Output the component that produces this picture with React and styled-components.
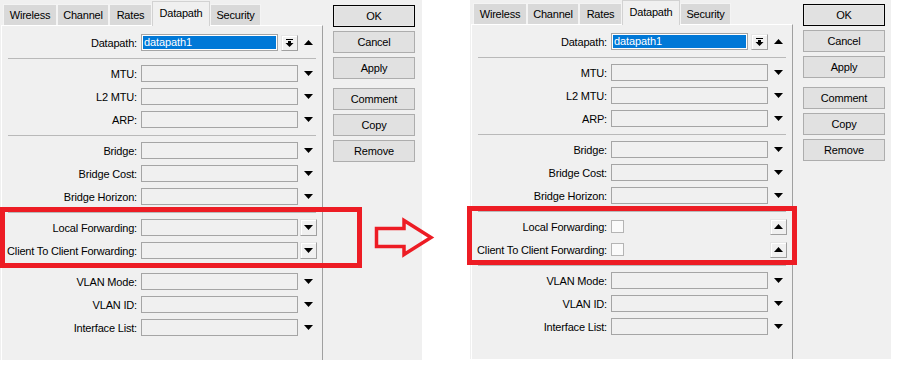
import React from "react";
import styled, { createGlobalStyle } from "styled-components";

const GlobalStyle = createGlobalStyle`
  html, body {
    margin: 0;
    padding: 0;
    background: #ffffff;
  }
  body {
    font-family: "Liberation Sans", Arial, sans-serif;
    font-size: 11px;
    color: #000;
  }
  * {
    box-sizing: border-box;
  }
`;

const Page = styled.div`
  position: relative;
  display: flex;
  gap: 48px;
  width: 906px;
  height: 367px;
`;

const Window = styled.div`
  display: flex;
  width: ${(p) => p.$width}px;
  height: ${(p) => p.$height}px;
  padding: ${(p) => p.$top}px 0 0 1px;
  background: #f0f0f0;
`;

const Form = styled.div`
  display: flex;
  flex-direction: column;
  width: 322px;
`;

const TabStrip = styled.div`
  display: flex;
  align-items: flex-end;
  height: 24px;
  padding-left: 2px;
  position: relative;
  z-index: 1;
`;

const Tab = styled.div`
  display: flex;
  align-items: center;
  justify-content: center;
  width: ${(p) => p.$w}px;
  height: ${(p) => (p.$active ? 25 : 21)}px;
  margin-bottom: ${(p) => (p.$active ? -1 : 0)}px;
  padding-bottom: ${(p) => (p.$active ? 3 : 0)}px;
  background: ${(p) => (p.$active ? "#f0f0f0" : "#d9d9d9")};
  border: 1px solid ${(p) => (p.$active ? "#d2d2d2" : "#f4f4f4")};
  border-bottom: none;
  letter-spacing: -0.2px;
  white-space: nowrap;
`;

const Pane = styled.div`
  flex: 1;
  border-top: 1px solid #ffffff;
  border-left: 1px solid #ffffff;
  border-right: 1px solid #a0a0a0;
  padding-top: 5px;
`;

const Row = styled.div`
  display: flex;
  align-items: center;
  height: 23px;
`;

const Label = styled.div`
  width: 135px;
  margin-right: 4px;
  text-align: right;
  white-space: nowrap;
  letter-spacing: -0.18px;
`;

const Field = styled.div`
  display: flex;
  align-items: center;
  gap: ${(p) => p.$gap || 0}px;
  width: 157px;
  height: 17px;
`;

const Input = styled.div`
  flex: 1;
  height: 17px;
  padding: 1px 2px;
  border: 1px solid #a5a5a5;
  background: ${(p) => (p.$selected ? "#0078d7" : "#f0f0f0")};
  box-shadow: ${(p) => (p.$selected ? "inset 0 0 0 1px #ffffff" : "none")};
  color: #ffffff;
  line-height: 13px;
  letter-spacing: -0.1px;
`;

const Checkbox = styled.div`
  width: 13px;
  height: 13px;
  border: 1px solid #b4b4b4;
  background: #fafafa;
`;

const Side = styled.div`
  display: flex;
  align-items: center;
  justify-content: center;
  width: 17px;
  margin-left: 2px;
`;

const SmallButton = styled.div`
  display: flex;
  align-items: center;
  justify-content: center;
  width: 17px;
  height: ${(p) => p.$h || 17}px;
  background: #f0f0f0;
  border: 1px solid;
  border-color: #e6e6e6 #a0a0a0 #a0a0a0 #e6e6e6;
  box-shadow: inset 1px 1px 0 #ffffff;
`;

const Separator = styled.div`
  margin: 4px 6px 3px;
  height: 0;
  border-top: 1px solid #b9b9b9;
`;

const Actions = styled.div`
  display: flex;
  flex-direction: column;
  gap: 4px;
  width: 82px;
  margin: 4px 0 0 10px;
`;

const ActionButton = styled.button`
  height: 22px;
  margin-top: ${(p) => (p.$spaced ? 5 : 0)}px;
  padding: 0;
  font-family: "Liberation Sans", Arial, sans-serif;
  font-size: 11px;
  letter-spacing: -0.2px;
  color: #000;
  background: #e1e1e1;
  border: 1px solid ${(p) => (p.$default ? "#000000" : "#adadad")};
  box-shadow: ${(p) => (p.$default ? "inset 0 0 0 1px #e8e8e8" : "none")};
`;

const Highlight = styled.div`
  position: absolute;
  left: ${(p) => p.$x}px;
  top: ${(p) => p.$y}px;
  width: ${(p) => p.$w}px;
  height: ${(p) => p.$h}px;
  border: 5px solid #ed1c24;
  pointer-events: none;
`;

const ArrowMark = styled.svg`
  position: absolute;
  left: 372px;
  top: 216px;
  overflow: visible;
`;

const Triangle = ({ up }) => (
  <svg width="9" height="5" viewBox="0 0 9 5">
    <polygon points={up ? "0,5 9,5 4.5,0" : "0,0 9,0 4.5,5"} fill="#000" />
  </svg>
);

const DropIcon = () => (
  <svg width="9" height="9" viewBox="0 0 9 9">
    <rect x="1" y="1" width="7" height="1" fill="#000" />
    <rect x="3" y="3" width="3" height="2" fill="#000" />
    <polygon points="0.5,5 8.5,5 4.5,9" fill="#000" />
  </svg>
);

const tabs = [
  { name: "Wireless", w: 54 },
  { name: "Channel", w: 52 },
  { name: "Rates", w: 43 },
  { name: "Datapath", w: 58, active: true },
  { name: "Security", w: 51 },
];

const groups = [
  [{ label: "Datapath", kind: "combo", value: "datapath1" }],
  [{ label: "MTU" }, { label: "L2 MTU" }, { label: "ARP" }],
  [{ label: "Bridge" }, { label: "Bridge Cost" }, { label: "Bridge Horizon" }],
  [
    { label: "Local Forwarding", kind: "flag" },
    { label: "Client To Client Forwarding", kind: "flag" },
  ],
  [{ label: "VLAN Mode" }, { label: "VLAN ID" }, { label: "Interface List" }],
];

const actions = [
  { name: "OK", default: true },
  { name: "Cancel" },
  { name: "Apply" },
  { name: "Comment", spaced: true },
  { name: "Copy" },
  { name: "Remove" },
];

const FormRow = ({ item, checkMode }) => {
  if (item.kind === "combo") {
    return (
      <Row>
        <Label>{item.label}:</Label>
        <Field $gap={3}>
          <Input $selected>{item.value}</Input>
          <SmallButton $h={16}>
            <DropIcon />
          </SmallButton>
        </Field>
        <Side>
          <Triangle up />
        </Side>
      </Row>
    );
  }
  if (item.kind === "flag") {
    return (
      <Row>
        <Label>{item.label}:</Label>
        <Field>{checkMode ? <Checkbox /> : <Input />}</Field>
        <Side>
          <SmallButton $h={checkMode ? 16 : 17}>
            <Triangle up={checkMode} />
          </SmallButton>
        </Side>
      </Row>
    );
  }
  return (
    <Row>
      <Label>{item.label}:</Label>
      <Field>
        <Input />
      </Field>
      <Side>
        <Triangle />
      </Side>
    </Row>
  );
};

const DatapathWindow = ({ width, height, top, checkMode }) => (
  <Window $width={width} $height={height} $top={top}>
    <Form>
      <TabStrip>
        {tabs.map((t) => (
          <Tab key={t.name} $w={t.w} $active={t.active}>
            {t.name}
          </Tab>
        ))}
      </TabStrip>
      <Pane>
        {groups.map((group, gi) => (
          <React.Fragment key={gi}>
            {gi > 0 && <Separator />}
            {group.map((item) => (
              <FormRow key={item.label} item={item} checkMode={checkMode} />
            ))}
          </React.Fragment>
        ))}
      </Pane>
    </Form>
    <Actions>
      {actions.map((a) => (
        <ActionButton key={a.name} $default={a.default} $spaced={a.spaced}>
          {a.name}
        </ActionButton>
      ))}
    </Actions>
  </Window>
);

const App = () => (
  <>
    <GlobalStyle />
    <Page>
      <DatapathWindow width={422} height={360} top={1} />
      <DatapathWindow width={421} height={359} top={0} checkMode />
      <Highlight $x={0} $y={207} $w={362} $h={61} />
      <Highlight $x={467} $y={206} $w={330} $h={59} />
      <ArrowMark width="64" height="44" viewBox="0 0 64 44">
        <polygon
          points="4.5,12.5 32,12.5 32,4.5 59,21.5 32,38.5 32,30.5 4.5,30.5"
          fill="none"
          stroke="#ed1c24"
          strokeWidth="3.5"
        />
      </ArrowMark>
    </Page>
  </>
);

export default App;
